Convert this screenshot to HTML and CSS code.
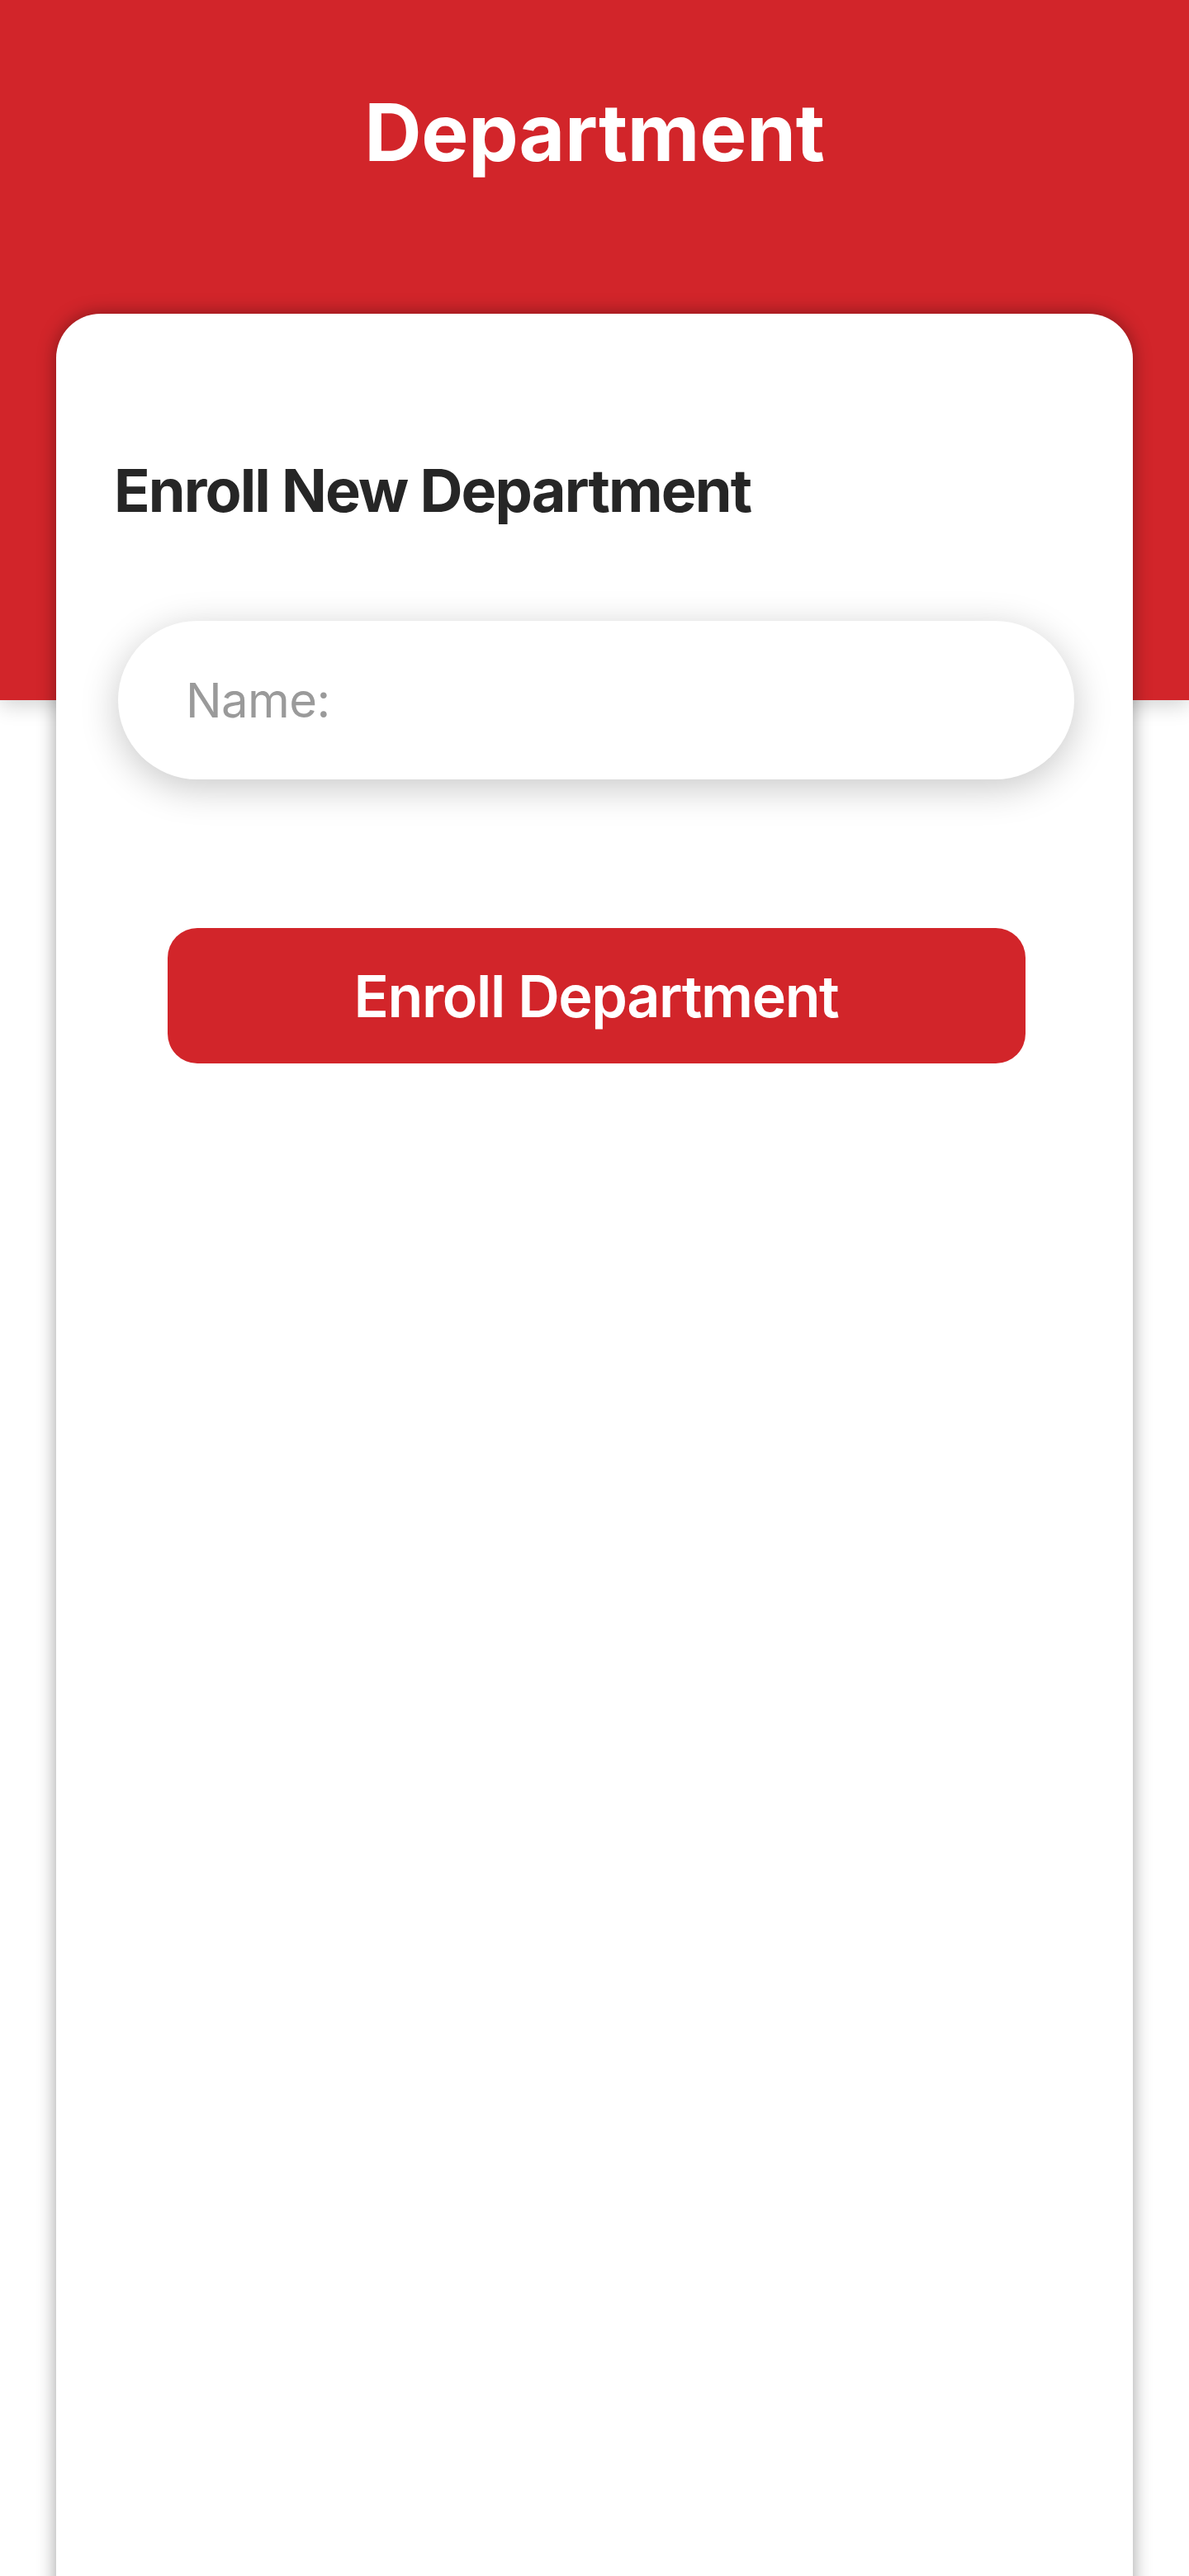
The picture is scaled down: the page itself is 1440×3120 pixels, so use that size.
FILE: index.html
```html
<!DOCTYPE html>
<html lang="en">
<head>
<meta charset="utf-8">
<title>Department</title>
<link rel="stylesheet" href="styles.css">
</head>
<body>
<header class="topbar">
  <h1 class="topbar-title">Department</h1>
</header>
<main class="card">
  <h2 class="card-title">Enroll New Department</h2>
  <form class="enroll-form" onsubmit="return false;">
    <input class="name-input" type="text" placeholder="Name:">
    <button class="enroll-btn" type="submit">Enroll Department</button>
  </form>
</main>
</body>
</html>
```

FILE: styles.css
```css
* {
  box-sizing: border-box;
}

html, body {
  margin: 0;
  padding: 0;
}

body {
  width: 1440px;
  height: 3120px;
  overflow: hidden;
  background: #ffffff;
  font-family: Inter, "Noto Sans", sans-serif;
}

.topbar {
  height: 848px;
  background: #d2252a;
  padding-top: 102px;
  box-shadow: 0 6px 24px rgba(0, 0, 0, 0.18);
}

.topbar-title {
  margin: 0;
  text-align: center;
  color: #ffffff;
  font-size: 96px;
  line-height: 116px;
  font-weight: 700;
  letter-spacing: -0.2px;
}

.card {
  position: relative;
  margin: -468px 68px 0;
  height: 2800px;
  background: #ffffff;
  border-radius: 54px 54px 0 0;
  box-shadow: 0 0 22px rgba(0, 0, 0, 0.38);
  padding: 170px 71px 0 75px;
}

.card-title {
  margin: 0 0 0 -5px;
  color: #262626;
  font-size: 72px;
  line-height: 88px;
  font-weight: 700;
  letter-spacing: -1.9px;
}

.enroll-form {
  display: flex;
  flex-direction: column;
  align-items: center;
  margin-top: 114px;
}

.name-input {
  width: 100%;
  height: 192px;
  border: none;
  outline: none;
  border-radius: 96px;
  background: #ffffff;
  box-shadow: 0 10px 46px rgba(0, 0, 0, 0.22);
  padding: 0 0 0 82px;
  font-family: Inter, "Noto Sans", sans-serif;
  font-size: 58px;
  letter-spacing: -0.6px;
  color: #333333;
}

.name-input::placeholder {
  color: #9a9a9a;
}

.enroll-btn {
  margin-top: 180px;
  width: 1039px;
  height: 164px;
  border: none;
  border-radius: 36px;
  background: #d2252a;
  color: #ffffff;
  font-family: Inter, "Noto Sans", sans-serif;
  font-size: 70px;
  font-weight: 600;
  letter-spacing: -1.4px;
  cursor: pointer;
}
```
